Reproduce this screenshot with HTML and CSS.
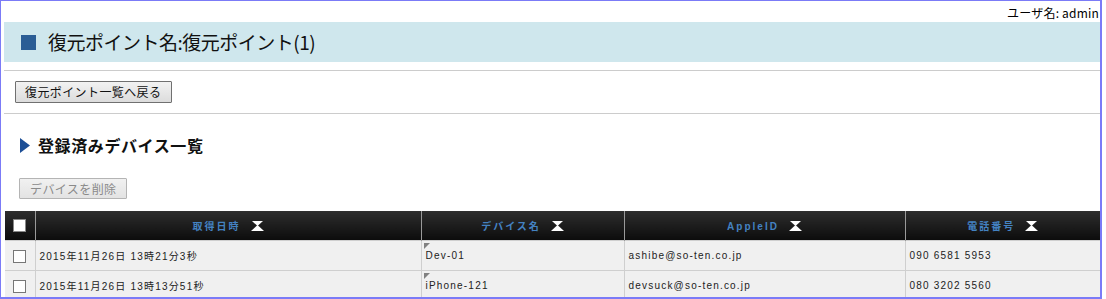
FILE: index.html
```html
<!DOCTYPE html>
<html lang="ja">
<head>
<meta charset="utf-8">
<title>復元ポイント</title>
<link rel="stylesheet" href="styles.css">
</head>
<body>
<div class="frame">
  <div class="userbar"><span class="user">ユーザ名: admin</span></div>
  <div class="titlebar">
    <span class="square"></span>
    <h1 class="title">復元ポイント名:復元ポイント(1)</h1>
  </div>
  <div class="rule rule-top"></div>
  <div class="backrow">
    <button class="btn">復元ポイント一覧へ戻る</button>
  </div>
  <div class="rule rule-mid"></div>
  <div class="section">
    <svg class="tri" width="10" height="15" viewBox="0 0 10 15"><polygon points="0,0 10,7.5 0,15" fill="#1d4f96"/></svg>
    <h2 class="section-title">登録済みデバイス一覧</h2>
  </div>
  <div class="delrow">
    <button class="btn btn-disabled" disabled>デバイスを削除</button>
  </div>
  <table class="grid">
    <colgroup>
      <col class="c-check"><col class="c-date"><col class="c-name"><col class="c-apple"><col class="c-tel">
    </colgroup>
    <thead>
      <tr>
        <th class="th-check"><span class="hbox"></span></th>
        <th><span class="hlabel">取得日時</span><svg class="sort" width="13" height="10" viewBox="0 0 13 10"><polygon points="1,0 12,0 6.5,5" fill="#fff"/><polygon points="6.5,4 0,10 13,10" fill="#fff"/></svg></th>
        <th><span class="hlabel">デバイス名</span><svg class="sort" width="13" height="10" viewBox="0 0 13 10"><polygon points="1,0 12,0 6.5,5" fill="#fff"/><polygon points="6.5,4 0,10 13,10" fill="#fff"/></svg></th>
        <th><span class="hlabel">AppleID</span><svg class="sort" width="13" height="10" viewBox="0 0 13 10"><polygon points="1,0 12,0 6.5,5" fill="#fff"/><polygon points="6.5,4 0,10 13,10" fill="#fff"/></svg></th>
        <th><span class="hlabel">電話番号</span><svg class="sort" width="13" height="10" viewBox="0 0 13 10"><polygon points="1,0 12,0 6.5,5" fill="#fff"/><polygon points="6.5,4 0,10 13,10" fill="#fff"/></svg></th>
      </tr>
    </thead>
    <tbody>
      <tr>
        <td class="td-check"><span class="cbox"></span></td>
        <td>2015年11月26日 13時21分3秒</td>
        <td class="td-name"><span class="marker"></span>Dev-01</td>
        <td>ashibe@so-ten.co.jp</td>
        <td>090 6581 5953</td>
      </tr>
      <tr>
        <td class="td-check"><span class="cbox"></span></td>
        <td>2015年11月26日 13時13分51秒</td>
        <td class="td-name"><span class="marker"></span>iPhone-121</td>
        <td>devsuck@so-ten.co.jp</td>
        <td>080 3202 5560</td>
      </tr>
    </tbody>
  </table>
</div>
</body>
</html>
```
FILE: styles.css
```css
html, body {
  margin: 0;
  padding: 0;
  background: #fff;
}
body {
  font-family: "Liberation Sans", "Noto Sans CJK JP", sans-serif;
  color: #000;
}
.frame {
  width: 1102px;
  height: 299px;
  box-sizing: border-box;
  border-style: solid;
  border-color: #7b7bf7;
  border-width: 1px 2px 2px 1px;
  overflow: hidden;
}
.userbar {
  height: 21px;
  display: flex;
  justify-content: flex-end;
  align-items: center;
  padding-right: 1px;
  font-family: "Noto Sans CJK JP", sans-serif;
  font-size: 12px;
  line-height: 14px;
  padding-top: 2px;
  box-sizing: border-box;
}
.user { letter-spacing: 0.2px; white-space: nowrap; }
.titlebar {
  margin-left: 3px;
  height: 40px;
  background: #cfe7ed;
  display: flex;
  align-items: center;
  padding-left: 17px;
  gap: 12px;
}
.square {
  width: 15px;
  height: 15px;
  background: #2a5d95;
  flex: none;
}
.title {
  margin: 0;
  font-family: "Noto Sans CJK JP", sans-serif;
  font-weight: normal;
  font-size: 19px;
  line-height: 22px;
  color: #111;
  letter-spacing: -0.5px;
}
.rule {
  margin-left: 3px;
  height: 1px;
  background: #cccccc;
}
.rule-top { margin-top: 8px; }
.backrow {
  padding: 10px 0 0 14px;
  height: 32px;
  box-sizing: border-box;
}
.btn {
  display: block;
  margin: 0;
  padding: 0 10px 0 9px;
  height: 22px;
  font-family: "Noto Sans CJK JP", sans-serif;
  font-size: 12px;
  line-height: 18px;
  letter-spacing: 0.4px;
  color: #111;
  background: linear-gradient(#f2f2f2, #dcdcdc);
  border: 1px solid #707070;
  border-radius: 1px;
}
.btn-disabled {
  height: 21px;
  padding: 0 10px;
  color: #8a8a8a;
  background: linear-gradient(#f1f1f1, #e3e3e3);
  border-color: #b4b4b4;
}
.rule-mid { margin-top: 10px; }
.section {
  display: flex;
  align-items: center;
  gap: 8px;
  padding-left: 19px;
  margin-top: 22px;
  height: 18px;
}
.tri { flex: none; }
.section-title {
  margin: 0;
  font-family: "Noto Sans CJK JP", sans-serif;
  font-size: 16px;
  line-height: 18px;
  font-weight: bold;
  color: #111;
  letter-spacing: 0.6px;
}
.delrow {
  padding: 24px 0 0 18px;
  height: 57px;
  box-sizing: border-box;
}
.grid {
  margin-left: 4px;
  width: 1095px;
  border-collapse: collapse;
  table-layout: fixed;
}
.c-check { width: 30px; }
.c-date { width: 386px; }
.c-name { width: 203px; }
.c-apple { width: 281px; }
.c-tel { width: 195px; }
.grid th {
  height: 29px;
  padding: 0;
  background: linear-gradient(#2e2e2e, #0c0c0c);
  border-left: 1px solid #9a9a9a;
  text-align: center;
  font-family: "Liberation Sans", "Noto Sans CJK JP", sans-serif;
  font-size: 10px;
  font-weight: bold;
  color: #4482c2;
  letter-spacing: 2px;
  white-space: nowrap;
}
.grid th.th-check { border-left: none; }
.hlabel { vertical-align: middle; }
.sort {
  vertical-align: middle;
  margin-left: 10px;
}
.hbox {
  display: inline-block;
  width: 11px;
  height: 11px;
  background: #fff;
  border: 1px solid #888;
  vertical-align: middle;
}
.grid td {
  height: 29px;
  padding: 0 0 0 4px;
  background: #f0f0f0;
  border: 1px solid #cfcfcf;
  font-size: 10px;
  letter-spacing: 1.2px;
  color: #222;
  white-space: nowrap;
  vertical-align: middle;
}
.grid td.td-check {
  padding: 0;
  text-align: center;
  border-left: none;
}
.cbox {
  display: inline-block;
  width: 11px;
  height: 11px;
  background: #fff;
  border: 1px solid #777;
  vertical-align: middle;
  margin-top: 2px;
}
.td-name {
  position: relative;
}
.marker {
  position: absolute;
  left: 2px;
  top: 2px;
  width: 0;
  height: 0;
  border-top: 6px solid #808080;
  border-right: 6px solid transparent;
}
```
